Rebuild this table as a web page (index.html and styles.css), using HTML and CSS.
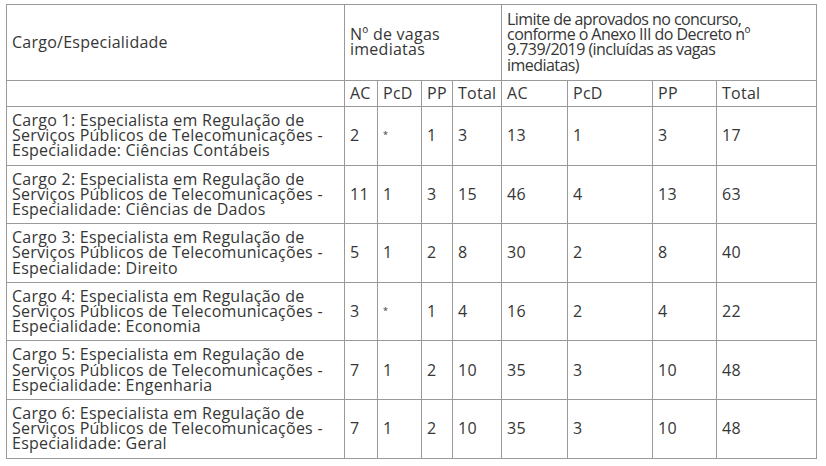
FILE: index.html
```html
<!DOCTYPE html>
<html lang="pt-BR">
<head>
<meta charset="utf-8">
<title>Vagas</title>
<link rel="stylesheet" href="styles.css">
</head>
<body>
<table class="grid">
  <colgroup>
    <col class="c-cargo"><col class="c-ac"><col class="c-pcd"><col class="c-pp"><col class="c-tot">
    <col class="c-ac2"><col class="c-pcd2"><col class="c-pp2"><col class="c-tot2">
  </colgroup>
  <tr class="head1">
    <td>Cargo/Especialidade</td>
    <td colspan="4">Nº de vagas<br>imediatas</td>
    <td colspan="4" class="limite">Limite de aprovados no concurso,<br>conforme o Anexo III do Decreto nº<br>9.739/2019 (incluídas as vagas<br>imediatas)</td>
  </tr>
  <tr class="head2">
    <td></td><td>AC</td><td>PcD</td><td>PP</td><td>Total</td><td>AC</td><td>PcD</td><td>PP</td><td>Total</td>
  </tr>
  <tr class="row">
    <td>Cargo 1: Especialista em Regulação de<br>Serviços Públicos de Telecomunicações -<br>Especialidade: Ciências Contábeis</td>
    <td>2</td><td><span class="ast">*</span></td><td>1</td><td>3</td><td>13</td><td>1</td><td>3</td><td>17</td>
  </tr>
  <tr class="row">
    <td>Cargo 2: Especialista em Regulação de<br>Serviços Públicos de Telecomunicações -<br>Especialidade: Ciências de Dados</td>
    <td>11</td><td>1</td><td>3</td><td>15</td><td>46</td><td>4</td><td>13</td><td>63</td>
  </tr>
  <tr class="row">
    <td>Cargo 3: Especialista em Regulação de<br>Serviços Públicos de Telecomunicações -<br>Especialidade: Direito</td>
    <td>5</td><td>1</td><td>2</td><td>8</td><td>30</td><td>2</td><td>8</td><td>40</td>
  </tr>
  <tr class="row">
    <td>Cargo 4: Especialista em Regulação de<br>Serviços Públicos de Telecomunicações -<br>Especialidade: Economia</td>
    <td>3</td><td><span class="ast">*</span></td><td>1</td><td>4</td><td>16</td><td>2</td><td>4</td><td>22</td>
  </tr>
  <tr class="row">
    <td>Cargo 5: Especialista em Regulação de<br>Serviços Públicos de Telecomunicações -<br>Especialidade: Engenharia</td>
    <td>7</td><td>1</td><td>2</td><td>10</td><td>35</td><td>3</td><td>10</td><td>48</td>
  </tr>
  <tr class="row">
    <td>Cargo 6: Especialista em Regulação de<br>Serviços Públicos de Telecomunicações -<br>Especialidade: Geral</td>
    <td>7</td><td>1</td><td>2</td><td>10</td><td>35</td><td>3</td><td>10</td><td>48</td>
  </tr>
</table>
</body>
</html>
```
FILE: styles.css
```css
html, body {
  margin: 0;
  padding: 0;
  background: #ffffff;
}
body {
  padding: 4px 0 0 6px;
  font-family: "Open Sans", "Lato", sans-serif;
  font-size: 16px;
  letter-spacing: 0.25px;
  color: #363636;
}
.grid {
  border-collapse: collapse;
  table-layout: fixed;
  width: 810px;
}
.grid td {
  border: 1px solid #9a9a9a;
  padding: 6px 5px;
  line-height: 15.2px;
  vertical-align: middle;
  white-space: nowrap;
  overflow: hidden;
  text-align: left;
}
.head1 td {
  padding: 7px 5px;
}
.head1 .limite {
  letter-spacing: -0.55px;
}
.head2 td {
  padding: 5px 5px;
}
.c-cargo { width: 338px; }
.c-ac { width: 33px; }
.c-pcd { width: 44px; }
.c-pp { width: 31px; }
.c-tot { width: 49px; }
.c-ac2 { width: 66px; }
.c-pcd2 { width: 85px; }
.c-pp2 { width: 64px; }
.c-tot2 { width: 100px; }
.ast {
  font-size: 9px;
  vertical-align: 4px;
}
```
